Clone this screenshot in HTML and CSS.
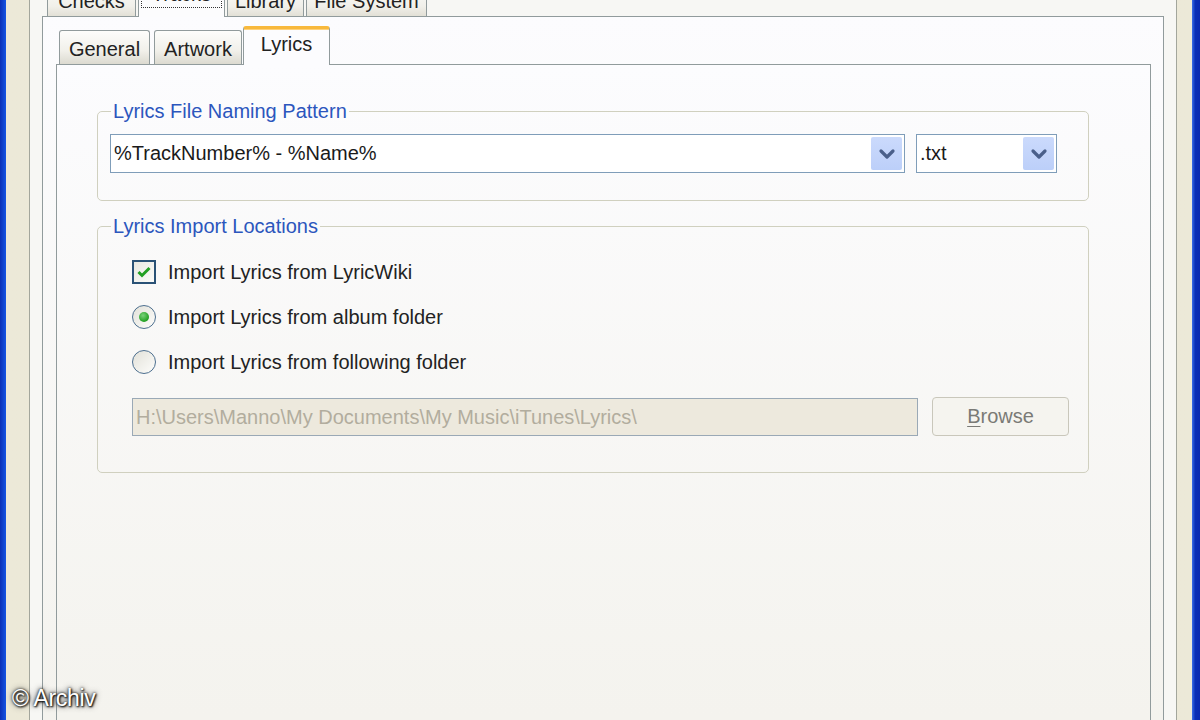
FILE: index.html
```html
<!DOCTYPE html>
<html>
<head>
<meta charset="utf-8">
<link rel="stylesheet" href="styles.css">
</head>
<body>
<div class="win">
  <div class="edge-left"></div>
  <div class="dialog">
    <div class="frame">
      <div class="outer-tabs">
        <div class="otab otab-checks"><span>Checks</span></div>
        <div class="otab otab-tracks sel"><span class="focus">Tracks</span></div>
        <div class="otab otab-library"><span>Library</span></div>
        <div class="otab otab-fs"><span>File System</span></div>
      </div>
      <div class="outer-panel">
        <div class="inner-tabs">
          <div class="itab itab-general">General</div>
          <div class="itab itab-artwork">Artwork</div>
          <div class="itab itab-lyrics sel">Lyrics</div>
        </div>
        <div class="inner-panel">
          <fieldset class="group group-naming">
            <legend>Lyrics File Naming Pattern</legend>
            <div class="combo-row">
              <div class="combo combo-pattern">
                <span class="combo-text">%TrackNumber% - %Name%</span>
                <span class="combo-btn"><svg width="18" height="12" viewBox="0 0 18 12"><path d="M3 3 L9 9 L15 3" fill="none" stroke="#4a5f8a" stroke-width="3.2" stroke-linecap="round" stroke-linejoin="round"/></svg></span>
              </div>
              <div class="combo combo-ext">
                <span class="combo-text">.txt</span>
                <span class="combo-btn"><svg width="18" height="12" viewBox="0 0 18 12"><path d="M3 3 L9 9 L15 3" fill="none" stroke="#4a5f8a" stroke-width="3.2" stroke-linecap="round" stroke-linejoin="round"/></svg></span>
              </div>
            </div>
          </fieldset>
          <fieldset class="group group-import">
            <legend>Lyrics Import Locations</legend>
            <div class="opt opt-first">
              <span class="check"><svg width="16" height="14" viewBox="0 0 16 14"><path d="M2.5 7 L6 10.5 L13.5 3" fill="none" stroke="#22a022" stroke-width="3"/></svg></span>
              <span class="opt-label">Import Lyrics from LyricWiki</span>
            </div>
            <div class="opt">
              <span class="radio on"><span class="dot"></span></span>
              <span class="opt-label">Import Lyrics from album folder</span>
            </div>
            <div class="opt">
              <span class="radio"></span>
              <span class="opt-label">Import Lyrics from following folder</span>
            </div>
            <div class="path-row">
              <div class="path-input">H:\Users\Manno\My Documents\My Music\iTunes\Lyrics\</div>
              <div class="browse"><u>B</u>rowse</div>
            </div>
          </fieldset>
        </div>
      </div>
    </div>
  </div>
  <div class="edge-right"></div>
</div>
<div class="watermark">© Archiv</div>
</body>
</html>
```
FILE: styles.css
```css
html, body {
  margin: 0;
  padding: 0;
}
body {
  width: 1200px;
  height: 720px;
  overflow: hidden;
  position: relative;
  font-family: "Liberation Sans", Arial, sans-serif;
  font-size: 20px;
  color: #222;
  background: #0b3ed6;
}
.win {
  display: flex;
  height: 780px;
}
.edge-left {
  width: 6px;
  background: linear-gradient(90deg, #0a2fb6, #1656e4);
}
.edge-right {
  width: 8px;
  background: linear-gradient(90deg, #3c6fe8, #0a2fb6 40%, #0a2ab0);
}
.dialog {
  flex: 1;
  display: flex;
  background: linear-gradient(90deg, #ece9d8, #efe6d4 60%, #ece9d8);
  padding: 0 15px 0 23px;
  min-width: 0;
}
.frame {
  flex: 1;
  min-width: 0;
  border-left: 1px solid #a3a69c;
  border-right: 1px solid #a3a69c;
  background: #f7f7f4;
  padding: 0 12px;
  display: flex;
  flex-direction: column;
}

/* Outer tabs */
.outer-tabs {
  display: flex;
  align-items: flex-end;
  height: 36px;
  margin-top: -20px;
  padding-left: 5px;
  position: relative;
  z-index: 2;
}
.otab {
  height: 34px;
  box-sizing: border-box;
  border: 1px solid #919b9c;
  border-bottom: none;
  border-radius: 3px 3px 0 0;
  background: linear-gradient(#fdfdfb, #f1f0ea 70%, #e2e0d6);
  display: flex;
  align-items: center;
  justify-content: center;
  margin-right: 2px;
  color: #222;
}
.otab span {
  display: block;
  line-height: 22px;
  margin-top: 2px;
}
.otab-checks { width: 89px; }
.otab-tracks { width: 87px; }
.otab-library { width: 77px; }
.otab-fs { width: 121px; }
.otab.sel {
  height: 37px;
  margin-bottom: -1px;
  background: #fcfcfd;
}
.otab .focus {
  outline: 1px dotted #333;
  outline-offset: 0;
  padding: 0 10px 0 10px;
  line-height: 26px;
  margin-top: -10px;
}

.outer-panel {
  flex: 1;
  border: 1px solid #919b9c;
  background: linear-gradient(#fcfcfe, #f4f3ee 700px);
  padding: 9px 12px 0 13px;
  display: flex;
  flex-direction: column;
}

/* Inner tabs */
.inner-tabs {
  display: flex;
  align-items: flex-end;
  height: 38px;
  padding-left: 3px;
  position: relative;
  z-index: 2;
}
.itab {
  height: 34px;
  box-sizing: border-box;
  border: 1px solid #919b9c;
  border-bottom: none;
  border-radius: 3px 3px 0 0;
  background: linear-gradient(#fdfdfb, #f1f0ea 60%, #dcdad0);
  display: flex;
  align-items: center;
  justify-content: center;
  line-height: 22px;
  padding-top: 2px;
  color: #222;
}
.itab-general { width: 91px; margin-right: 4px; }
.itab-artwork { width: 88px; margin-right: 1px; }
.itab-lyrics { width: 87px; }
.itab.sel {
  height: 39px;
  margin-bottom: -1px;
  background: #fcfcfe;
  border-top: 3px solid #f8b93c;
  box-shadow: inset 0 1px 0 #ffd27a;
  padding-top: 0;
  padding-bottom: 6px;
}

.inner-panel {
  flex: 1;
  border: 1px solid #919b9c;
  background: linear-gradient(#fcfcfe, #f4f3ee 650px);
  padding: 35px 61px 0 40px;
}

/* Group boxes */
.group {
  margin: 0;
  border: 1px solid #d0d0bf;
  border-radius: 5px;
  padding: 0 12px;
  min-width: 0;
}
.group legend {
  padding: 0 2px;
  margin-left: 1px;
  line-height: 22px;
  color: #2c56bd;
}
.group-naming {
  padding-bottom: 27px;
}
.group-import {
  margin-top: 14px;
  padding-bottom: 36px;
}

/* Combos */
.combo-row {
  display: flex;
  gap: 11px;
  margin-top: 12px;
}
.combo {
  height: 39px;
  box-sizing: border-box;
  border: 1px solid #7f9db9;
  background: #fff;
  display: flex;
  align-items: center;
  padding: 2px;
}
.combo-pattern { width: 795px; }
.combo-ext { width: 141px; }
.combo-text {
  flex: 1;
  padding-left: 1px;
  color: #1a1a1a;
}
.combo-btn {
  width: 31px;
  height: 33px;
  background: linear-gradient(#cbdafc, #bccff9);
  border-radius: 2px;
  display: flex;
  align-items: center;
  justify-content: center;
}

/* Options */
.opt {
  height: 45px;
  display: flex;
  align-items: center;
  padding-left: 22px;
  gap: 12px;
}
.opt-first {
  margin-top: 12px;
}
.check {
  width: 24px;
  height: 24px;
  box-sizing: border-box;
  border: 2px solid #2a5276;
  background: linear-gradient(135deg, #e8e8e1, #fbfbf9);
  display: flex;
  align-items: center;
  justify-content: center;
}
.radio {
  width: 24px;
  height: 24px;
  box-sizing: border-box;
  border: 1.5px solid #4d6f8f;
  border-radius: 50%;
  background: linear-gradient(135deg, #e2e1d9, #fdfdfb);
  display: flex;
  align-items: center;
  justify-content: center;
}
.radio .dot {
  width: 10px;
  height: 10px;
  border-radius: 50%;
  background: radial-gradient(circle at 40% 35%, #7ad27a, #22a022 70%);
}
.opt-label {
  line-height: 22px;
  color: #222;
}

/* Path row */
.path-row {
  display: flex;
  align-items: center;
  gap: 14px;
  margin-top: 13px;
  padding-left: 22px;
}
.path-input {
  width: 786px;
  height: 38px;
  box-sizing: border-box;
  border: 1px solid #9aa9b6;
  background: #ede9dd;
  color: #b2ad9e;
  display: flex;
  align-items: center;
  padding-left: 3px;
  margin-top: 1px;
}
.browse {
  width: 137px;
  height: 39px;
  box-sizing: border-box;
  border: 1px solid #c9c7bb;
  border-radius: 4px;
  background: #f5f4ef;
  color: #7a7a76;
  display: flex;
  align-items: center;
  justify-content: center;
}
.browse u {
  text-decoration-thickness: 1px;
  text-underline-offset: 3px;
}

.watermark {
  position: absolute;
  left: 12px;
  bottom: 9px;
  color: #fff;
  font-size: 23px;
  line-height: 26px;
  letter-spacing: -0.3px;
  text-shadow: 0 0 3px #000, 0 0 6px #333, 1px 1px 2px #000;
}
```
